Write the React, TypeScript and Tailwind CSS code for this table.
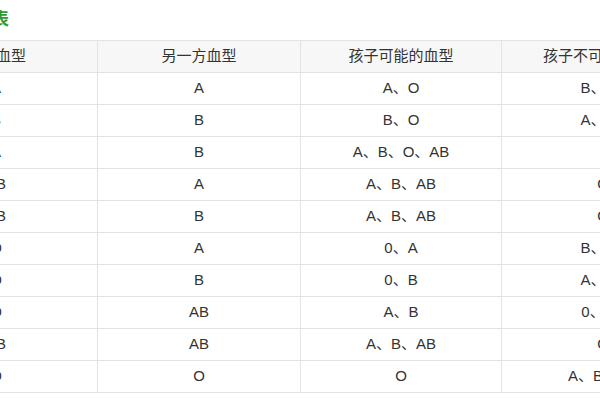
import React from "react";

const rows: [string, string, string, string][] = [
  ["A", "A", "A、O", "B、AB"],
  ["B", "B", "B、O", "A、AB"],
  ["A", "B", "A、B、O、AB", ""],
  ["AB", "A", "A、B、AB", "O"],
  ["AB", "B", "A、B、AB", "O"],
  ["O", "A", "0、A", "B、AB"],
  ["O", "B", "0、B", "A、AB"],
  ["O", "AB", "A、B", "0、AB"],
  ["AB", "AB", "A、B、AB", "O"],
  ["O", "O", "O", "A、B、AB"],
];

const widths = ["w-[203px]", "w-[203px]", "w-[201px]", "w-[203px]"];

export default function App() {
  return (
    <div
      className="w-[600px] h-[400px] overflow-hidden bg-white text-[#333]"
      style={{ fontFamily: '"Liberation Sans", "Noto Sans CJK SC", sans-serif' }}
    >
      <div className="h-[40px] flex items-center">
        <div className="w-[9px] flex justify-end whitespace-nowrap">
          <span className="text-[17px] font-bold text-[#2f9a2f] leading-none -mt-[2px]">血型遗传表</span>
        </div>
      </div>
      <table className="border-collapse table-fixed -ml-[106px] w-[810px]">
        <thead>
          <tr className="h-[32px] bg-[#f7f7f7]">
            {["一方血型", "另一方血型", "孩子可能的血型", "孩子不可能的血型"].map((h, i) => (
              <th
                key={h}
                className={`${widths[i]} border border-[#e3e3e3] text-center font-normal text-[15px] p-0`}
              >
                {h}
              </th>
            ))}
          </tr>
        </thead>
        <tbody>
          {rows.map((r, ri) => (
            <tr key={ri} className="h-[32px]">
              {r.map((c, ci) => (
                <td
                  key={ci}
                  className="border border-[#e3e3e3] text-center text-[15px] p-0 whitespace-nowrap"
                >
                  {c}
                </td>
              ))}
            </tr>
          ))}
        </tbody>
      </table>
    </div>
  );
}
